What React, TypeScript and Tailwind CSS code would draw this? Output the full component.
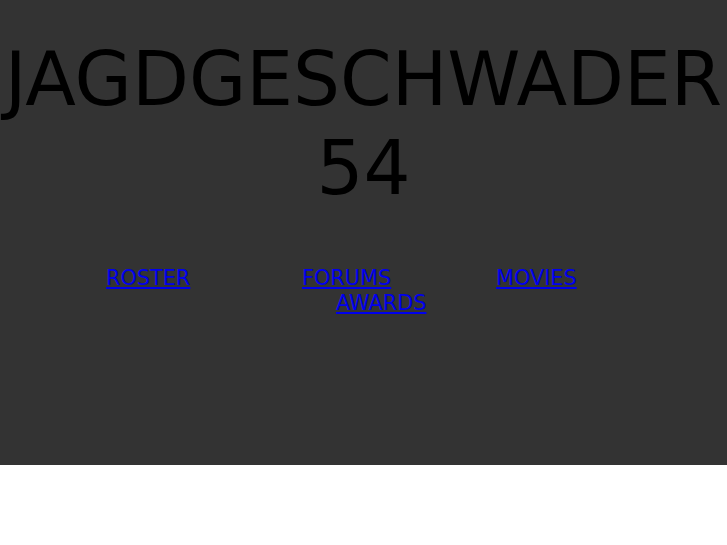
export default function App() {
  return (
    <div className="min-h-[545px] bg-white" style={{ fontFamily: '"DejaVu Sans", sans-serif' }}>
      <header className="h-[465px] bg-[#333333] pt-[35px]">
        <h1 className="text-center text-[74px] leading-[89px] font-normal text-black">
          JAGDGESCHWADER 54
        </h1>
        <nav className="mt-[53px] text-[20.8px] leading-[25px]">
          <div className="flex pl-[106px]">
            <a href="#" className="w-[196px] text-[#0000ee] underline">ROSTER</a>
            <a href="#" className="w-[194px] text-[#0000ee] underline">FORUMS</a>
            <a href="#" className="text-[#0000ee] underline">MOVIES</a>
          </div>
          <div className="flex pl-[336px]">
            <a href="#" className="text-[#0000ee] underline">AWARDS</a>
          </div>
        </nav>
      </header>
    </div>
  );
}
